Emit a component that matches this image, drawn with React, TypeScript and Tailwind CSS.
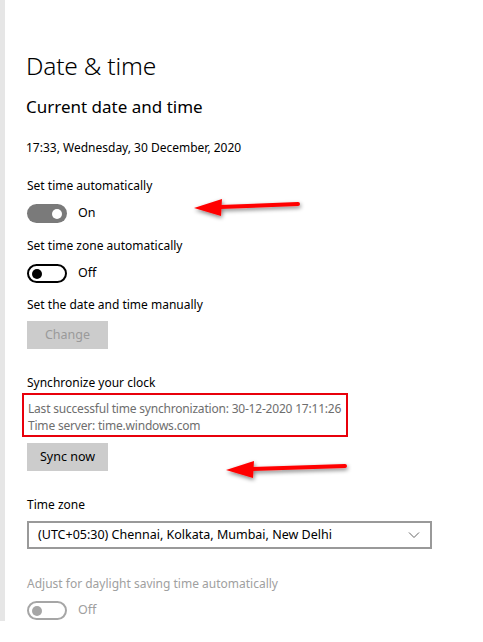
import React from "react";

function Toggle({ state }: { state: "on" | "off" | "disabled" }) {
  if (state === "on") {
    return (
      <div className="w-[40px] h-[19px] rounded-full bg-[#7a7a7a] flex items-center justify-end pr-[5px]">
        <div className="w-[10px] h-[10px] rounded-full bg-white" />
      </div>
    );
  }
  const c = state === "off" ? "border-[#000000]" : "border-[#a6a6a6]";
  const k = state === "off" ? "bg-[#000000]" : "bg-[#a6a6a6]";
  return (
    <div className={`w-[40px] h-[19px] rounded-full border-2 ${c} flex items-center pl-[3px]`}>
      <div className={`w-[10px] h-[10px] rounded-full ${k}`} />
    </div>
  );
}

function Arrow({ className, len, id }: { className: string; len: number; id: string }) {
  const w = len + 20;
  return (
    <svg className={className} width={w} height="30" viewBox={`0 0 ${w} 30`}>
      <defs>
        <filter id={id} x="-20%" y="-50%" width="140%" height="200%">
          <feGaussianBlur in="SourceAlpha" stdDeviation="2" />
          <feOffset dx="1" dy="2" result="b" />
          <feComponentTransfer>
            <feFuncA type="linear" slope="0.5" />
          </feComponentTransfer>
          <feMerge>
            <feMergeNode />
            <feMergeNode in="SourceGraphic" />
          </feMerge>
        </filter>
      </defs>
      <g filter={`url(#${id})`}>
        <line x1="34" y1="14" x2={8 + len} y2="11" stroke="#ff0000" strokeWidth="4" strokeLinecap="round" />
        <polygon points="8,15 36,6 35,23" fill="#ff0000" />
      </g>
    </svg>
  );
}

export default function App() {
  return (
    <div
      className="relative w-[483px] h-[642px] bg-white overflow-hidden"
      style={{ fontFamily: '"Noto Sans", "Open Sans", sans-serif' }}
    >
      <div className="flex">
        <div className="w-[5px] h-[621px] bg-[#e6e6e6]" />
        <div className="flex flex-col pl-[21px] text-[#000000]">
          <div className="mt-[50px] text-[24.5px] font-light leading-[32px] tracking-[-0.2px]">Date &amp; time</div>
          <div className="mt-[13px] text-[17px] leading-[24px]">Current date and time</div>
          <div className="mt-[20px] text-[12px] leading-[18px]">17:33, Wednesday, 30 December, 2020</div>
          <div className="mt-[20px] text-[12px] leading-[18px] pl-[1px]">Set time automatically</div>
          <div className="mt-[9px] flex items-center gap-[11px] pl-[1px]">
            <Toggle state="on" />
            <span className="text-[12.5px]">On</span>
          </div>
          <div className="mt-[14px] text-[12px] leading-[18px] pl-[1px]">Set time zone automatically</div>
          <div className="mt-[9px] flex items-center gap-[11px] pl-[1px]">
            <Toggle state="off" />
            <span className="text-[12.5px]">Off</span>
          </div>
          <div className="mt-[13px] text-[12px] leading-[18px] pl-[1px]">Set the date and time manually</div>
          <div className="mt-[7px] ml-[1px] w-[81px] h-[28px] bg-[#cccccc] flex items-center justify-center text-[12.5px] text-[#9a9a9a]">
            Change
          </div>
          <div className="mt-[25px] text-[12px] leading-[18px] pl-[1px]">Synchronize your clock</div>
          <div className="mt-[1px] -ml-[4px] w-[326px] border-2 border-[#e8000b] pl-[4px] pt-[5px] pb-[1px] text-[12px] leading-[17px] text-[#6e6e6e] whitespace-nowrap tracking-[-0.2px]">
            <div>Last successful time synchronization: 30-12-2020 17:11:26</div>
            <div>Time server: time.windows.com</div>
          </div>
          <div className="mt-[6px] ml-[1px] w-[81px] h-[28px] bg-[#cccccc] flex items-center justify-center text-[12.5px] text-[#000000]">
            Sync now
          </div>
          <div className="mt-[25px] text-[12px] leading-[18px] pl-[1px]">Time zone</div>
          <div className="mt-[7px] ml-[1px] w-[405px] h-[28px] border-2 border-[#999999] flex items-center justify-between pl-[9px] pr-[10px] text-[12.5px]">
            <span>(UTC+05:30) Chennai, Kolkata, Mumbai, New Delhi</span>
            <svg width="12" height="8" viewBox="0 0 12 8">
              <polyline points="1,1.5 6,6.5 11,1.5" fill="none" stroke="#666" strokeWidth="1" />
            </svg>
          </div>
          <div className="mt-[26px] text-[12px] leading-[18px] pl-[1px] text-[#a0a0a0]">Adjust for daylight saving time automatically</div>
          <div className="mt-[8px] flex items-center gap-[11px] pl-[1px]">
            <Toggle state="disabled" />
            <span className="text-[12.5px] text-[#a0a0a0]">Off</span>
          </div>
        </div>
      </div>
      <Arrow id="a1" len={104} className="absolute left-[186px] top-[193px]" />
      <Arrow id="a2" len={119} className="absolute left-[218px] top-[455px]" />
    </div>
  );
}
